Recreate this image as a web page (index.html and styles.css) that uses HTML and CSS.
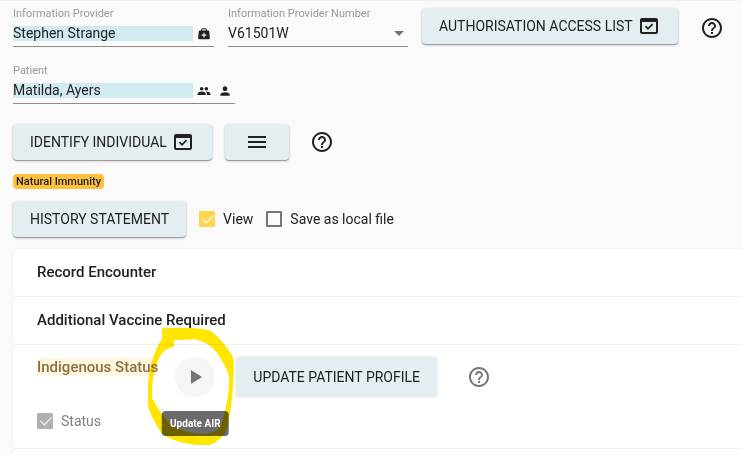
FILE: index.html
```
<!DOCTYPE html>
<html lang="en">
<head>
    <meta charset="UTF-8">
    <meta name="viewport" content="width=device-width, initial-scale=1.0">
    <title>Patient</title>
    <link rel="stylesheet" href="styles.css">
</head>
<body>
    <svg class="defs" width="0" height="0" aria-hidden="true">
        <symbol id="icon-help" viewBox="0 0 24 24"><path d="M11 18h2v-2h-2v2zm1-16C6.48 2 2 6.48 2 12s4.48 10 10 10 10-4.480 10-10S17.520 2 12 2zm0 18c-4.410 0-8-3.590-8-8s3.590-8 8-8 8 3.590 8 8-3.590 8-8 8zm0-14c-2.210 0-4 1.790-4 4h2c0-1.100.9-2 2-2s2 .9 2 2c0 2-3 1.750-3 5h2c0-2.250 3-2.500 3-5 0-2.210-1.790-4-4-4z"/></symbol>
        <symbol id="icon-check-window" viewBox="0 0 24 24"><path fill-rule="evenodd" d="M5 4h14a2 2 0 0 1 2 2v12a2 2 0 0 1-2 2H5a2 2 0 0 1-2-2V6a2 2 0 0 1 2-2zm0 4v10h14V8zm2.900 4.800l1.200-1.200 1.900 1.900 4-4 1.200 1.200-5.200 5.200z"/></symbol>
        <symbol id="icon-menu" viewBox="0 0 24 24"><path d="M3 18h18v-2H3v2zm0-5h18v-2H3v2zm0-7v2h18V6H3z"/></symbol>
        <symbol id="icon-medical" viewBox="0 0 24 24"><path fill-rule="evenodd" d="M10 2h4a3 3 0 0 1 3 3v1h2a2 2 0 0 1 2 2l1 11a2 2 0 0 1-2 2H4a2 2 0 0 1-2-2L3 8a2 2 0 0 1 2-2h2V5a3 3 0 0 1 3-3zm0 2a1 1 0 0 0-1 1v1h6V5a1 1 0 0 0-1-1zm1 6v3H8v2h3v3h2v-3h3v-2h-3v-3z"/></symbol>
        <symbol id="icon-people" viewBox="0 0 24 24"><path d="M16 11c1.660 0 2.990-1.340 2.990-3S17.660 5 16 5s-3 1.340-3 3 1.340 3 3 3zm-8 0c1.660 0 2.990-1.340 2.990-3S9.660 5 8 5 5 6.340 5 8s1.340 3 3 3zm0 2c-2.330 0-7 1.170-7 3.500V19h14v-2.500c0-2.330-4.670-3.500-7-3.500zm8 0c-.3 0-.6 0-1 .1 1.200.8 2 2 2 3.400V19h6v-2.500c0-2.330-4.670-3.500-7-3.500z"/></symbol>
        <symbol id="icon-person" viewBox="0 0 24 24"><path d="M12 12c2.210 0 4-1.790 4-4s-1.790-4-4-4-4 1.790-4 4 1.790 4 4 4zm0 2c-2.670 0-8 1.340-8 4v2h16v-2c0-2.660-5.330-4-8-4z"/></symbol>
        <symbol id="icon-play" viewBox="0 0 24 24"><path d="M8 5v14l11-7z"/></symbol>
    </svg>

    <main class="page">
        <div class="toolbar">
            <div class="field">
                <label for="provider">Information Provider</label>
                <div class="field-line">
                    <input type="text" id="provider" class="text-input" value="Stephen Strange">
                    <button class="mini-button" aria-label="Select provider"><svg><use href="#icon-medical"/></svg></button>
                </div>
            </div>
            <div class="field">
                <label for="provider-number">Information Provider Number</label>
                <div class="field-line select-line">
                    <select id="provider-number"><option>V61501W</option></select>
                </div>
            </div>
            <button class="button">AUTHORISATION ACCESS LIST <svg class="icon"><use href="#icon-check-window"/></svg></button>
            <button class="help-button" aria-label="Help"><svg class="icon"><use href="#icon-help"/></svg></button>
        </div>

        <div class="patient-row">
            <div class="field">
                <label for="patient">Patient</label>
                <div class="field-line">
                    <input type="text" id="patient" class="text-input" value="Matilda, Ayers">
                    <button class="mini-button" aria-label="Patients"><svg><use href="#icon-people"/></svg></button>
                    <button class="mini-button" aria-label="Patient details"><svg><use href="#icon-person"/></svg></button>
                </div>
            </div>
        </div>

        <div class="actions">
            <button class="button">IDENTIFY INDIVIDUAL <svg class="icon"><use href="#icon-check-window"/></svg></button>
            <button class="button menu-button" aria-label="Menu"><svg class="icon"><use href="#icon-menu"/></svg></button>
            <button class="help-button" aria-label="Help"><svg class="icon"><use href="#icon-help"/></svg></button>
        </div>

        <span class="badge">Natural Immunity</span>

        <div class="history">
            <button class="button">HISTORY STATEMENT</button>
            <label class="check"><input type="checkbox" checked> View</label>
            <label class="check"><input type="checkbox"> Save as local file</label>
        </div>

        <div class="panels">
            <section class="panel"><h2>Record Encounter</h2></section>
            <section class="panel"><h2>Additional Vaccine Required</h2></section>
            <section class="panel panel-open">
                <div class="status-row">
                    <h2 class="highlight">Indigenous Status</h2>
                    <div class="play-wrap">
                        <button class="play-button" aria-describedby="air-tip" aria-label="Update AIR"><svg class="icon"><use href="#icon-play"/></svg></button>
                        <svg class="marker" viewBox="0 0 270 360" aria-hidden="true">
                            <path fill-rule="evenodd" d="M42 4 L105 2 C140 3 170 4 186 11 C210 25 235 58 252 84 L257 100 V145 C255 200 248 255 238 300 C230 325 215 342 184 354 H155 C120 353 75 343 43 320 C25 298 8 265 0 238 V170 C5 115 20 68 42 35 Z M78 60 V40 L136 37 C165 40 190 55 210 82 C227 110 241 133 244 153 C243 205 233 250 220 290 C210 312 190 320 166 320 C125 322 85 306 61 286 C40 260 22 232 12 212 C11 175 15 135 29 103 C40 77 56 61 78 60 Z"/>
                        </svg>
                        <span class="tooltip" id="air-tip" role="tooltip">Update AIR</span>
                    </div>
                    <button class="button profile-button">UPDATE PATIENT PROFILE</button>
                    <button class="help-button muted" aria-label="Help"><svg class="icon"><use href="#icon-help"/></svg></button>
                </div>
                <label class="check"><input type="checkbox" checked disabled> Status</label>
            </section>
            <section class="panel"></section>
        </div>
    </main>
</body>
</html>
```
FILE: styles.css
```
* { box-sizing: border-box; }

body {
    margin: 0;
    overflow: hidden;
    background-color: #fafafa;
    color: #212121;
    font-family: Roboto, "Liberation Sans", sans-serif;
    font-size: 14px;
    line-height: 16px;
}

button, input, select {
    font: inherit;
    color: inherit;
}

button {
    border: none;
    padding: 0;
    background: none;
    cursor: pointer;
}

svg { fill: currentColor; }

.defs { position: absolute; }

.page {
    border-top: 1px solid #f0f0f0;
    padding: 7px 0 0 13px;
}

.toolbar {
    display: flex;
    align-items: flex-start;
    gap: 14px;
}

.patient-row {
    display: flex;
    margin-top: 17px;
}

/* text fields */
.field label {
    display: block;
    font-size: 11px;
    line-height: 12px;
    color: #999;
}

.field-line {
    display: flex;
    align-items: center;
    height: 27px;
    border-bottom: 1px solid #8c8c8c;
}

.text-input {
    width: 180px;
    height: 15px;
    border: none;
    padding: 0;
    background-color: #d2ebf3;
}

.mini-button {
    width: 21px;
    height: 16px;
    padding-top: 2px;
}

.mini-button svg {
    display: block;
    width: 14px;
    height: 14px;
    margin: 0 auto;
}

.select-line { position: relative; }

.select-line select {
    appearance: none;
    width: 180px;
    border: none;
    padding: 0;
    background: none;
}

.select-line::after {
    content: "";
    position: absolute;
    right: 4px;
    border: 5px solid transparent;
    border-top-color: #757575;
    border-bottom: none;
    pointer-events: none;
}

/* buttons */
.button {
    display: flex;
    align-items: center;
    gap: 4px;
    height: 36px;
    padding: 0 17px;
    border-radius: 4px;
    background-color: #e4eef0;
    white-space: nowrap;
    box-shadow: 0 1px 3px rgba(0, 0, 0, 0.2), 0 1px 1px rgba(0, 0, 0, 0.3);
}

.icon {
    display: block;
    width: 24px;
    height: 24px;
}

.menu-button { padding: 0 20px; }

.help-button { padding: 8px; }

.actions {
    display: flex;
    align-items: center;
    gap: 13px;
    height: 36px;
    margin-top: 20px;
}

.badge {
    display: table;
    margin-top: 14px;
    padding: 0 3px;
    border-radius: 4px;
    background-color: #ffc13b;
    font-size: 11px;
    line-height: 15px;
    font-weight: 500;
}

.history {
    display: flex;
    align-items: center;
    gap: 13px;
    margin-top: 12px;
}

/* checkboxes */
.check {
    display: flex;
    align-items: center;
    gap: 8px;
}

.check input {
    appearance: none;
    width: 16px;
    height: 16px;
    margin: 0;
    border: 2px solid #757575;
    border-radius: 1px;
}

.check input:checked {
    border: none;
    background-color: #ffd54f;
}

.check input:checked::before {
    content: "";
    display: block;
    width: 5px;
    height: 10px;
    margin: 1px 0 0 6px;
    border: solid #fff;
    border-width: 0 1px 1px 0;
    transform: rotate(45deg);
}

.check input:disabled { background-color: #b0b0b0; }

/* panels */
.panels { margin-top: 12px; }

.panel {
    min-height: 47px;
    margin-bottom: 1px;
    padding: 0 24px;
    border-radius: 4px 0 0 4px;
    background-color: #fff;
    box-shadow: 0 0 2px rgba(0, 0, 0, 0.1);
}

.panel h2 {
    margin: 0;
    font-size: 15px;
    line-height: 47px;
    font-weight: 500;
}

.panel-open { padding: 12px 24px 19px; }

.panel .highlight {
    margin-top: 1px;
    line-height: 18px;
    background-color: #fff6e0;
    color: #8d6e40;
    white-space: nowrap;
}

.status-row {
    display: flex;
    align-items: flex-start;
}

.play-wrap {
    position: relative;
    margin: 0 21px 0 17px;
}

.play-button {
    display: block;
    width: 40px;
    height: 40px;
    padding: 8px;
    border-radius: 50%;
    background-color: #f5f5f5;
    color: #757575;
}

/* pen ring round the play button */
.marker {
    position: absolute;
    top: -30px;
    left: -27px;
    width: 90px;
    height: 120px;
    fill: #ffe600;
    mix-blend-mode: multiply;
    pointer-events: none;
}

.tooltip {
    position: absolute;
    top: 54px;
    left: 50%;
    transform: translateX(-50%);
    padding: 0 8px;
    border-radius: 4px;
    background-color: rgba(0, 0, 0, 0.58);
    color: #fff;
    font-size: 10px;
    line-height: 25px;
    font-weight: 700;
    white-space: nowrap;
}

.profile-button {
    height: 40px;
    box-shadow: 0 0 2px rgba(0, 0, 0, 0.2);
}

.muted {
    margin-left: 22px;
    color: #757575;
}

.panel-open .check {
    margin-top: 16px;
    color: #808080;
}
```
